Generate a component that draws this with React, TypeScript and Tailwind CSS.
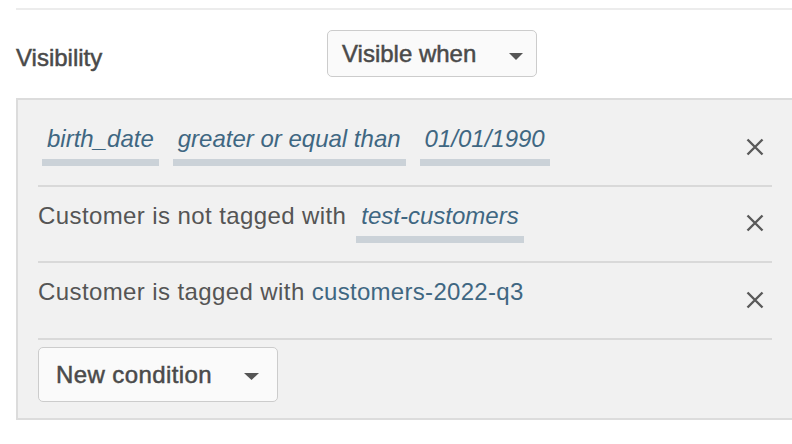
import React from "react";

function Caret({ w, h }: { w: number; h: number }) {
  return (
    <svg width={w} height={h} viewBox={`0 0 ${w} ${h}`} className="shrink-0">
      <path d={`M0 0 L${w} 0 L${w / 2} ${h} Z`} fill="#555555" />
    </svg>
  );
}

function CloseX() {
  return (
    <svg width="18" height="18" viewBox="0 0 18 18" className="shrink-0">
      <path d="M1.5 1.5 L16.5 16.5 M16.5 1.5 L1.5 16.5" stroke="#5a5a5a" strokeWidth="2.4" strokeLinecap="butt" />
    </svg>
  );
}

function Chip({ children }: { children: React.ReactNode }) {
  return (
    <span className="inline-block italic text-[#3f6782] leading-[28px] px-[5px] pb-[6px] border-b-[7px] border-[#cbd2d8]">
      {children}
    </span>
  );
}

export default function App() {
  return (
    <div className="w-[792px] h-[444px] bg-white font-['Liberation_Sans',Arial,sans-serif] text-[24px] overflow-hidden">
      <div className="pt-[8px] pl-[16px]">
        <div className="h-[2px] bg-[#ececec]" />
        <div className="flex h-[88px] items-start">
          <div className="w-[311px] pt-[34px] leading-[28px] text-[#4a4a4a] [-webkit-text-stroke:0.5px_#4a4a4a]">
            Visibility
          </div>
          <button className="mt-[20px] h-[47px] w-[210px] flex items-center justify-between rounded-[5px] border-[1.5px] border-[#cccccc] bg-[#fafafa] pl-[14px] pr-[13px] text-[#4a4a4a] leading-[28px]">
            <span className="[-webkit-text-stroke:0.5px_#4a4a4a]">Visible when</span>
            <span className="mt-[5px] flex">
              <Caret w={14} h={7} />
            </span>
          </button>
        </div>
        <div className="border-l-2 border-t-2 border-b-2 border-[#dcdcdc] bg-[#f1f1f1] pt-[10px] px-[20px] pb-[16px]">
          <div className="flex h-[77px] items-center justify-between border-b-2 border-[#d9d9d9]">
            <div className="self-start pt-[15px] pl-[4px] flex items-start gap-[14px]">
              <Chip>birth_date</Chip>
              <Chip>greater or equal than</Chip>
              <Chip>01/01/1990</Chip>
            </div>
            <div className="mr-[8px] mb-[2px] flex">
              <CloseX />
            </div>
          </div>
          <div className="flex h-[76px] items-center justify-between border-b-2 border-[#d9d9d9]">
            <div className="self-start pt-[15px] flex items-start gap-[10px]">
              <span className="leading-[28px] text-[#555555] tracking-[0.4px]">Customer is not tagged with</span>
              <Chip>test-customers</Chip>
            </div>
            <div className="mr-[8px] mb-[2px] flex">
              <CloseX />
            </div>
          </div>
          <div className="flex h-[77px] items-center justify-between border-b-2 border-[#d9d9d9]">
            <div className="self-start pt-[15px] flex items-start">
              <span className="leading-[28px] text-[#555555] tracking-[0.4px]">
                Customer is tagged with <span className="text-[#3f6782] tracking-[0.3px]">customers-2022-q3</span>
              </span>
            </div>
            <div className="mr-[8px] mb-[2px] flex">
              <CloseX />
            </div>
          </div>
          <div className="pt-[7px]">
            <button className="h-[55px] w-[240px] flex items-center justify-between rounded-[5px] border-[1.5px] border-[#cccccc] bg-[#fafafa] pl-[17px] pr-[18px] text-[#4a4a4a] leading-[28px]">
              <span className="tracking-[0.4px] [-webkit-text-stroke:0.5px_#4a4a4a]">New condition</span>
              <span className="mt-[3px] flex">
                <Caret w={15} h={7} />
              </span>
            </button>
          </div>
        </div>
      </div>
    </div>
  );
}
